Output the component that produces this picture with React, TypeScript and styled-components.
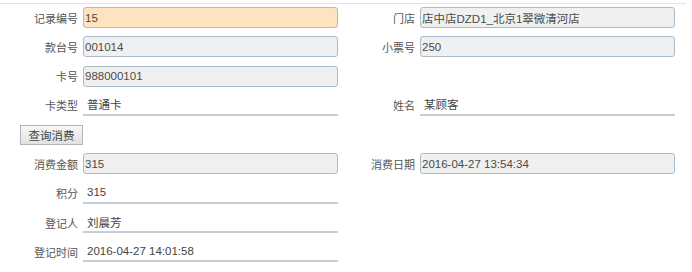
import React from "react";
import styled, { createGlobalStyle } from "styled-components";

const Global = createGlobalStyle`
  html, body { margin: 0; padding: 0; background: #ffffff; }
  body { font-family: "Liberation Sans", Arial, "Noto Sans CJK SC", sans-serif; }
`;

const Panel = styled.div`
  width: 686px;
  margin-top: 3px;
  border-top: 1px solid #e2e4e6;
  padding-top: 3px;
`;

const Form = styled.div`
  display: grid;
  grid-template-columns: 79px 255px 74px 255px;
  grid-auto-rows: 21px;
  column-gap: 4px;
  row-gap: 8.3px;
`;

const Label = styled.div`
  display: flex;
  align-items: center;
  justify-content: flex-end;
  font-size: 11px;
  color: #555;
  white-space: nowrap;
  padding-right: 1px;
`;

const Input = styled.div<{ $tone?: "orange" | "gray" }>`
  box-sizing: border-box;
  height: 21px;
  display: flex;
  align-items: center;
  padding-left: 1px;
  border: 1px solid #a9bccb;
  border-radius: 3px;
  background: ${(p) => (p.$tone === "orange" ? "#ffe2c0" : "#f0f0f0")};
  font-size: 11.5px;
  color: #4a4a4a;
  white-space: nowrap;
`;

const Plain = styled.div`
  box-sizing: border-box;
  height: 21px;
  display: flex;
  align-items: center;
  padding-left: 4px;
  border-bottom: 2px solid #c3d0d9;
  font-size: 11.5px;
  color: #444;
  white-space: nowrap;
`;

const Empty = styled.div``;

const ButtonCell = styled.div`
  grid-column: 1 / span 4;
  display: flex;
  align-items: center;
  padding-left: 20px;
`;

const Button = styled.button`
  box-sizing: border-box;
  height: 20px;
  width: 63px;
  padding: 0;
  border: 1px solid #b4b4b4;
  border-radius: 0;
  background: linear-gradient(#f6f6f6, #e2e2e2);
  font-family: inherit;
  font-size: 11.5px;
  color: #444;
`;

type Field = { label: string; value: string; kind: "orange" | "gray" | "plain" } | null;

const renderField = (f: Field, key: string) => {
  if (!f) return [<Empty key={key + "l"} />, <Empty key={key + "v"} />];
  return [
    <Label key={key + "l"}>{f.label}</Label>,
    f.kind === "plain" ? (
      <Plain key={key + "v"}>{f.value}</Plain>
    ) : (
      <Input key={key + "v"} $tone={f.kind}>{f.value}</Input>
    ),
  ];
};

const topRows: [Field, Field][] = [
  [
    { label: "记录编号", value: "15", kind: "orange" },
    { label: "门店", value: "店中店DZD1_北京1翠微清河店", kind: "gray" },
  ],
  [
    { label: "款台号", value: "001014", kind: "gray" },
    { label: "小票号", value: "250", kind: "gray" },
  ],
  [{ label: "卡号", value: "988000101", kind: "gray" }, null],
  [
    { label: "卡类型", value: "普通卡", kind: "plain" },
    { label: "姓名", value: "某顾客", kind: "plain" },
  ],
];

const bottomRows: [Field, Field][] = [
  [
    { label: "消费金额", value: "315", kind: "gray" },
    { label: "消费日期", value: "2016-04-27 13:54:34", kind: "gray" },
  ],
  [{ label: "积分", value: "315", kind: "plain" }, null],
  [{ label: "登记人", value: "刘晨芳", kind: "plain" }, null],
  [{ label: "登记时间", value: "2016-04-27 14:01:58", kind: "plain" }, null],
];

export default function App() {
  return (
    <>
      <Global />
      <Panel>
        <Form>
          {topRows.map(([a, b], i) => [
            ...renderField(a, `t${i}a`),
            ...renderField(b, `t${i}b`),
          ])}
          <ButtonCell>
            <Button>查询消费</Button>
          </ButtonCell>
          {bottomRows.map(([a, b], i) => [
            ...renderField(a, `b${i}a`),
            ...renderField(b, `b${i}b`),
          ])}
        </Form>
      </Panel>
    </>
  );
}
